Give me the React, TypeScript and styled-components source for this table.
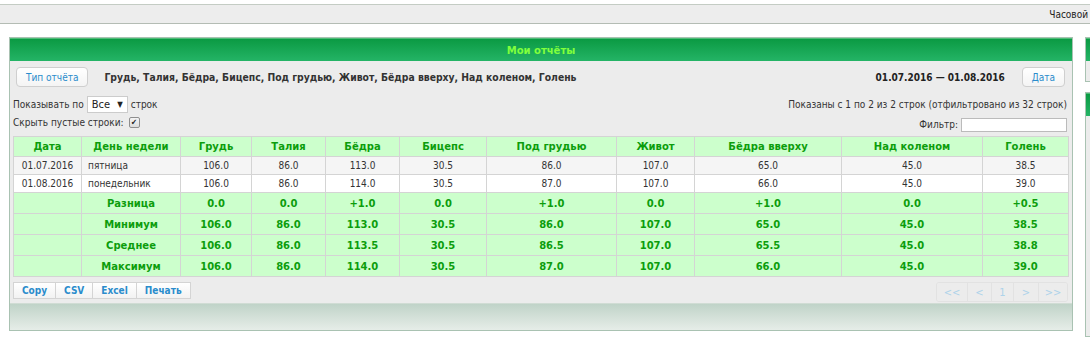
import React from "react";
import styled, { createGlobalStyle } from "styled-components";

const GlobalStyle = createGlobalStyle`
  html, body {
    margin: 0;
    padding: 0;
    background: #ffffff;
    overflow: hidden;
  }
  body {
    font-family: "DejaVu Sans Condensed", "DejaVu Sans", Verdana, sans-serif;
    font-size: 10px;
    color: #333333;
  }
`;

const TopBar = styled.div`
  margin-top: 4px;
  height: 18px;
  background: #ededed;
  border-top: 1px solid #c4ccc4;
  border-bottom: 1px solid #b4bcb4;
  display: flex;
  align-items: center;
  justify-content: flex-end;
  padding-right: 2px;
  font-size: 10px;
  color: #222;
`;

const Page = styled.div`
  display: flex;
  align-items: flex-start;
  gap: 12px;
  padding: 13px 0 0 9px;
  width: 1300px;
`;

const Panel = styled.div<{ $width: number }>`
  width: ${(p) => p.$width}px;
  flex-shrink: 0;
  background: #ececec;
  border: 1px solid #a9c2b2;
  box-sizing: border-box;
`;

const PanelHeader = styled.div`
  height: 23px;
  background: linear-gradient(#0b9a43, #24b466);
  border-top: 1px solid #4fbd78;
  box-sizing: border-box;
  display: flex;
  align-items: center;
  justify-content: center;
  color: #80ff3c;
  font-family: "DejaVu Sans", Verdana, sans-serif;
  font-weight: bold;
  font-size: 10px;
`;

const PanelBody = styled.div`
  padding: 6px 4px 1px 3px;
`;

const PanelFooter = styled.div`
  height: 26px;
  background: linear-gradient(#c0d3c8, #e6ede8);
  border-top: 1px solid #d0dcd4;
`;

const SideColumn = styled.div`
  display: flex;
  flex-direction: column;
  gap: 10px;
`;

const SideBody = styled.div<{ $height: number }>`
  height: ${(p) => p.$height}px;
`;

const Toolbar = styled.div`
  display: flex;
  align-items: center;
  padding: 0 3px;
  height: 20px;
`;

const Button = styled.button`
  height: 20px;
  padding: 0 9px;
  background: linear-gradient(#ffffff, #f4f4f4);
  border: 1px solid #cfcfcf;
  border-radius: 4px;
  color: #2a8ccc;
  font-family: "DejaVu Sans Condensed", "DejaVu Sans", sans-serif;
  font-size: 10px;
  cursor: pointer;
`;

const Fields = styled.div`
  flex: 1;
  margin-left: 16px;
  font-weight: bold;
  font-size: 10.3px;
  color: #333;
`;

const Period = styled.div`
  font-weight: bold;
  font-size: 10px;
  color: #222;
  margin-right: 17px;
`;

const Options = styled.div`
  display: flex;
  justify-content: space-between;
  margin-top: 9px;
  font-size: 10px;
`;

const OptionCol = styled.div<{ $right?: boolean }>`
  display: flex;
  flex-direction: column;
  align-items: ${(p) => (p.$right ? "flex-end" : "flex-start")};
  gap: ${(p) => (p.$right ? "3px" : "1px")};
  padding-right: ${(p) => (p.$right ? "1px" : "0")};
`;

const Line = styled.div`
  display: flex;
  align-items: center;
  gap: 3px;
  min-height: 17px;
`;

const Select = styled.div`
  display: flex;
  align-items: center;
  justify-content: space-between;
  width: 41px;
  height: 17px;
  box-sizing: border-box;
  padding: 0 4px;
  background: #ffffff;
  border: 1px solid #cccccc;
  font-size: 11px;
  color: #222;
  span:last-child {
    font-size: 8px;
  }
`;

const Check = styled.span`
  display: inline-flex;
  align-items: center;
  justify-content: center;
  width: 9px;
  height: 9px;
  border: 1px solid #8e8e8e;
  border-radius: 2px;
  background: linear-gradient(#f4f4f4, #dcdcdc);
  font-size: 8px;
  line-height: 1;
  color: #222;
  margin-left: 2px;
`;

const FilterInput = styled.div`
  width: 106px;
  height: 14px;
  box-sizing: border-box;
  background: #ffffff;
  border: 1px solid #bbbbbb;
`;

const Table = styled.table`
  margin-top: 3px;
  width: 1055px;
  border-collapse: collapse;
  table-layout: fixed;
  font-size: 10px;
`;

const HeadRow = styled.tr`
  height: 20px;
`;

const HeadCell = styled.th`
  padding: 0;
  background: #ccffcc;
  border: 1px solid #d4d4d4;
  color: #0c9d0c;
  font-family: "DejaVu Sans", Verdana, sans-serif;
  font-weight: bold;
  text-align: center;
`;

const Row = styled.tr<{ $odd?: boolean }>`
  height: 18px;
  background: ${(p) => (p.$odd ? "#f5f5f5" : "#ffffff")};
`;

const Cell = styled.td<{ $left?: boolean }>`
  padding: 0 6px;
  border: 1px solid #d4d4d4;
  text-align: ${(p) => (p.$left ? "left" : "center")};
  color: #333;
  white-space: nowrap;
`;

const SumRow = styled.tr`
  height: 21px;
`;

const SumCell = styled.td`
  padding: 0;
  background: #ccffcc;
  border: 1px solid #d4d4d4;
  color: #0c9d0c;
  font-family: "DejaVu Sans", Verdana, sans-serif;
  font-weight: bold;
  text-align: center;
`;

const BottomBar = styled.div`
  display: flex;
  justify-content: space-between;
  align-items: flex-start;
  margin-top: 5px;
`;

const Group = styled.div`
  display: flex;
`;

const GroupButton = styled.button`
  height: 17px;
  padding: 0 8px;
  background: linear-gradient(#ffffff, #f2f2f2);
  border: 1px solid #d4d4d4;
  margin-left: -1px;
  color: #2a8ccc;
  font-weight: bold;
  font-family: "DejaVu Sans Condensed", "DejaVu Sans", sans-serif;
  font-size: 10px;
  &:first-child {
    margin-left: 0;
  }
`;

const Pager = styled.div`
  display: flex;
  border: 1px solid #e2e2e2;
  border-radius: 3px;
  overflow: hidden;
`;

const PageButton = styled.div<{ $w: number }>`
  width: ${(p) => p.$w}px;
  height: 18px;
  display: flex;
  align-items: center;
  justify-content: center;
  background: #ececec;
  border-left: 1px solid #e2e2e2;
  color: #aed3ea;
  font-size: 11px;
  &:first-child {
    border-left: none;
  }
`;

const columns = [
  { title: "Дата", width: 68 },
  { title: "День недели", width: 99 },
  { title: "Грудь", width: 71 },
  { title: "Талия", width: 74 },
  { title: "Бёдра", width: 74 },
  { title: "Бицепс", width: 87 },
  { title: "Под грудью", width: 130 },
  { title: "Живот", width: 78 },
  { title: "Бёдра вверху", width: 147 },
  { title: "Над коленом", width: 141 },
  { title: "Голень", width: 86 },
];

const rows = [
  { date: "01.07.2016", day: "пятница", values: ["106.0", "86.0", "113.0", "30.5", "86.0", "107.0", "65.0", "45.0", "38.5"] },
  { date: "01.08.2016", day: "понедельник", values: ["106.0", "86.0", "114.0", "30.5", "87.0", "107.0", "66.0", "45.0", "39.0"] },
];

const summary = [
  { label: "Разница", values: ["0.0", "0.0", "+1.0", "0.0", "+1.0", "0.0", "+1.0", "0.0", "+0.5"] },
  { label: "Минимум", values: ["106.0", "86.0", "113.0", "30.5", "86.0", "107.0", "65.0", "45.0", "38.5"] },
  { label: "Среднее", values: ["106.0", "86.0", "113.5", "30.5", "86.5", "107.0", "65.5", "45.0", "38.8"] },
  { label: "Максимум", values: ["106.0", "86.0", "114.0", "30.5", "87.0", "107.0", "66.0", "45.0", "39.0"] },
];

const pages = [
  { label: "<<", w: 30 },
  { label: "<", w: 23 },
  { label: "1", w: 21 },
  { label: ">", w: 24 },
  { label: ">>", w: 28 },
];

export default function App() {
  return (
    <>
      <GlobalStyle />
      <TopBar>Часовой</TopBar>
      <Page>
        <Panel $width={1064}>
          <PanelHeader>Мои отчёты</PanelHeader>
          <PanelBody>
            <Toolbar>
              <Button>Тип отчёта</Button>
              <Fields>
                Грудь, Талия, Бёдра, Бицепс, Под грудью, Живот, Бёдра вверху, Над коленом, Голень
              </Fields>
              <Period>01.07.2016 — 01.08.2016</Period>
              <Button>Дата</Button>
            </Toolbar>
            <Options>
              <OptionCol>
                <Line>
                  Показывать по
                  <Select>
                    <span>Все</span>
                    <span>▼</span>
                  </Select>
                  строк
                </Line>
                <Line>
                  Скрыть пустые строки:<Check>✔</Check>
                </Line>
              </OptionCol>
              <OptionCol $right>
                <Line>Показаны с 1 по 2 из 2 строк (отфильтровано из 32 строк)</Line>
                <Line>
                  Фильтр: <FilterInput />
                </Line>
              </OptionCol>
            </Options>
            <Table>
              <colgroup>
                {columns.map((c) => (
                  <col key={c.title} style={{ width: c.width }} />
                ))}
              </colgroup>
              <thead>
                <HeadRow>
                  {columns.map((c) => (
                    <HeadCell key={c.title}>{c.title}</HeadCell>
                  ))}
                </HeadRow>
              </thead>
              <tbody>
                {rows.map((r, i) => (
                  <Row key={r.date} $odd={i % 2 === 0}>
                    <Cell>{r.date}</Cell>
                    <Cell $left>{r.day}</Cell>
                    {r.values.map((v, j) => (
                      <Cell key={j}>{v}</Cell>
                    ))}
                  </Row>
                ))}
                {summary.map((s) => (
                  <SumRow key={s.label}>
                    <SumCell />
                    <SumCell>{s.label}</SumCell>
                    {s.values.map((v, j) => (
                      <SumCell key={j}>{v}</SumCell>
                    ))}
                  </SumRow>
                ))}
              </tbody>
            </Table>
            <BottomBar>
              <Group>
                <GroupButton>Copy</GroupButton>
                <GroupButton>CSV</GroupButton>
                <GroupButton>Excel</GroupButton>
                <GroupButton>Печать</GroupButton>
              </Group>
              <Pager>
                {pages.map((p) => (
                  <PageButton key={p.label} $w={p.w}>
                    {p.label}
                  </PageButton>
                ))}
              </Pager>
            </BottomBar>
          </PanelBody>
          <PanelFooter />
        </Panel>
        <SideColumn>
          <Panel $width={120}>
            <PanelHeader />
            <SideBody $height={20} />
          </Panel>
          <Panel $width={120}>
            <PanelHeader />
            <SideBody $height={220} />
          </Panel>
        </SideColumn>
      </Page>
    </>
  );
}
